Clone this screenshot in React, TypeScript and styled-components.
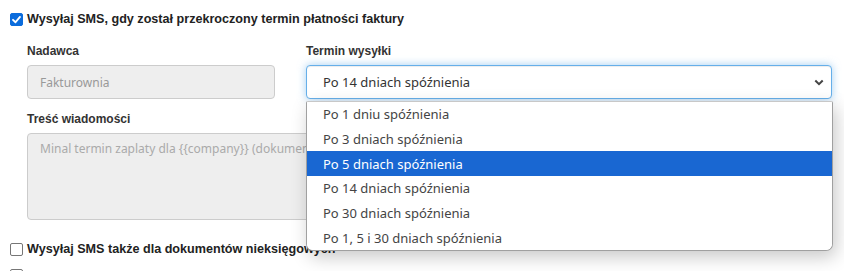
import React from "react";
import styled, { createGlobalStyle } from "styled-components";

const Global = createGlobalStyle`
  html, body { margin: 0; padding: 0; background: #fff; }
  body { font-family: "Liberation Sans", Arial, sans-serif; color: #333; }
  * { box-sizing: border-box; }
`;

const Page = styled.div`
  position: relative;
  width: 844px;
  height: 271px;
  overflow: hidden;
  padding: 11px 12px 0 10px;
`;

const CheckRow = styled.label<{ $mt?: number }>`
  display: flex;
  align-items: center;
  gap: 4px;
  margin-top: ${(p) => p.$mt ?? 0}px;
  font-size: 12.6px;
  font-weight: bold;
  color: #222;
  height: 16px;
`;

const Box = styled.span<{ $checked?: boolean }>`
  width: 13px;
  height: 13px;
  border-radius: 2px;
  flex: none;
  display: inline-flex;
  align-items: center;
  justify-content: center;
  background: ${(p) => (p.$checked ? "#0b6cdc" : "#fff")};
  border: 1px solid ${(p) => (p.$checked ? "#0b6cdc" : "#767676")};
`;

const Fields = styled.div`
  display: grid;
  grid-template-columns: 248px 526px;
  column-gap: 31px;
  margin-left: 17px;
  margin-top: 17px;
`;

const Label = styled.div`
  font-size: 12px;
  font-weight: bold;
  color: #333;
  height: 16px;
  margin-bottom: 5px;
`;

const Field = styled.div``;

const Input = styled.div`
  height: 34px;
  border: 1px solid #ccc;
  border-radius: 4px;
  background: #eee;
  color: #999;
  font-family: "Noto Sans", "Open Sans", sans-serif;
  font-size: 12px;
  padding: 0 12px;
  display: flex;
  align-items: center;
`;

const Select = styled.div`
  height: 34px;
  border: 1px solid #66afe9;
  border-radius: 4px;
  background: #fff;
  box-shadow: inset 0 1px 1px rgba(0, 0, 0, 0.075), 0 0 8px rgba(102, 175, 233, 0.6);
  color: #333;
  font-family: "Noto Sans", "Open Sans", sans-serif;
  font-size: 13px;
  padding: 0 7px 0 16px;
  display: flex;
  align-items: center;
  justify-content: space-between;
`;

const Message = styled.div`
  grid-column: 1 / span 2;
  margin-top: 13px;
`;

const TextArea = styled.div`
  height: 87px;
  border: 1px solid #ccc;
  border-radius: 4px;
  background: #eee;
  color: #aaa;
  font-family: "Noto Sans", "Open Sans", sans-serif;
  font-size: 12px;
  padding: 6px 12px;
  white-space: nowrap;
  overflow: hidden;
`;

const Dropdown = styled.ul`
  position: absolute;
  left: 306px;
  top: 101px;
  width: 527px;
  margin: 0;
  padding: 0;
  list-style: none;
  background: #fff;
  border: 1px solid #a0a0a0;
  border-top-color: #c8c8c8;
  border-radius: 2px 2px 7px 7px;
  box-shadow: 3px 6px 18px rgba(0, 0, 0, 0.22);
  font-family: "Noto Sans", "Open Sans", sans-serif;
  font-size: 13px;
  overflow: hidden;
`;

const Option = styled.li<{ $active?: boolean }>`
  height: 24.7px;
  display: flex;
  align-items: center;
  padding-left: 16px;
  background: ${(p) => (p.$active ? "#1967d2" : "#fff")};
  color: ${(p) => (p.$active ? "#fff" : "#444")};
`;

const Check = () => (
  <svg width="11" height="11" viewBox="0 0 12 12">
    <path d="M2.2 6.4 L4.9 9 L9.8 3.2" fill="none" stroke="#fff" strokeWidth="2.1" strokeLinecap="round" strokeLinejoin="round" />
  </svg>
);

const Chevron = () => (
  <svg width="10" height="7" viewBox="0 0 10 7">
    <path d="M1.3 1.5 L5 5.2 L8.7 1.5" fill="none" stroke="#444" strokeWidth="2" />
  </svg>
);

const options = [
  "Po 1 dniu spóźnienia",
  "Po 3 dniach spóźnienia",
  "Po 5 dniach spóźnienia",
  "Po 14 dniach spóźnienia",
  "Po 30 dniach spóźnienia",
  "Po 1, 5 i 30 dniach spóźnienia",
];

export default function App() {
  return (
    <>
      <Global />
      <Page>
        <CheckRow>
          <Box $checked>
            <Check />
          </Box>
          Wysyłaj SMS, gdy został przekroczony termin płatności faktury
        </CheckRow>
        <Fields>
          <Field>
            <Label>Nadawca</Label>
            <Input>Fakturownia</Input>
          </Field>
          <Field>
            <Label>Termin wysyłki</Label>
            <Select>
              Po 14 dniach spóźnienia
              <Chevron />
            </Select>
          </Field>
          <Message>
            <Label>Treść wiadomości</Label>
            <TextArea>Minal termin zaplaty dla {"{{company}}"} (dokument {"{{document}}"}), kwota {"{{price}}"}</TextArea>
          </Message>
        </Fields>
        <CheckRow $mt={21}>
          <Box />
          Wysyłaj SMS także dla dokumentów nieksięgowych
        </CheckRow>
        <CheckRow $mt={10}>
          <Box />
        </CheckRow>
        <Dropdown>
          {options.map((o, i) => (
            <Option key={o} $active={i === 2}>
              {o}
            </Option>
          ))}
        </Dropdown>
      </Page>
    </>
  );
}
